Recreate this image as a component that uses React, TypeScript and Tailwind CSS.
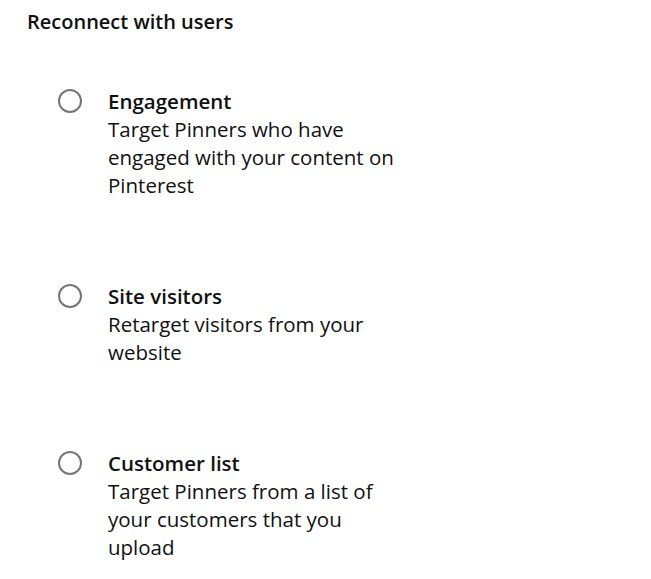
const options = [
  { title: 'Engagement', lines: ['Target Pinners who have', 'engaged with your content on', 'Pinterest'] },
  { title: 'Site visitors', lines: ['Retarget visitors from your', 'website'] },
  { title: 'Customer list', lines: ['Target Pinners from a list of', 'your customers that you', 'upload'] },
]

export default function App() {
  return (
    <div className="min-h-screen bg-white text-[#111111]" style={{ fontFamily: '"Open Sans", "Noto Sans", sans-serif' }}>
      <div className="pl-[27px] pt-[8px]">
        <h2 className="text-[20px] leading-[28px] font-semibold">Reconnect with users</h2>
        <div className="flex flex-col gap-[83px] pt-[51px] pl-[31px]">
          {options.map((o) => (
            <label key={o.title} className="flex items-start gap-[26px]">
              <span className="mt-[2px] w-[24px] h-[24px] shrink-0 rounded-full border-2 border-[#767676] bg-white" />
              <span className="flex flex-col text-[20.5px] leading-[28px]">
                <span className="font-semibold">{o.title}</span>
                {o.lines.map((l) => (
                  <span key={l}>{l}</span>
                ))}
              </span>
            </label>
          ))}
        </div>
      </div>
    </div>
  )
}
